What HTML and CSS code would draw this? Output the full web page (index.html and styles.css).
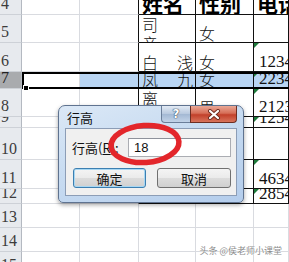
FILE: index.html
```html
<!DOCTYPE html>
<html lang="zh-CN">
<head>
    <meta charset="UTF-8">
    <title>行高</title>
    <link rel="stylesheet" href="styles.css">
</head>
<body>
<div class="sheet">

    <div class="row r4">
        <div class="hd">4</div><div class="c"></div><div class="c tl"></div>
        <div class="c t head">姓名</div><div class="c t head">性别</div><div class="c t head">电话</div>
    </div>
    <div class="row r5">
        <div class="hd">5</div><div class="c"></div><div class="c tl"></div>
        <div class="c t top"><span class="wrapped">司<br>亲</span></div><div class="c t cjk">女</div><div class="c t"></div>
    </div>
    <div class="row r6">
        <div class="hd">6</div><div class="c"></div><div class="c tl"></div>
        <div class="c t cjk spread"><span>白</span><span>浅</span></div><div class="c t cjk">女</div><div class="c t num">1234</div>
    </div>
    <div class="row r7 picked">
        <div class="hd on">7</div><div class="c active"></div><div class="c tl"></div>
        <div class="c t cjk spread"><span>凤</span><span>九</span></div><div class="c t cjk">女</div><div class="c t num">2234</div>
    </div>
    <div class="row r8">
        <div class="hd">8</div><div class="c"></div><div class="c tl"></div>
        <div class="c t top"><span class="wrapped">离<br>镜</span></div><div class="c t cjk">男</div><div class="c t num">2123</div>
    </div>
    <div class="row r9">
        <div class="hd">9</div><div class="c"></div><div class="c tl"></div>
        <div class="c t"></div><div class="c t"></div><div class="c t num">1254</div>
    </div>
    <div class="row r10">
        <div class="hd">10</div><div class="c"></div><div class="c tl"></div>
        <div class="c t"></div><div class="c t"></div><div class="c t"></div>
    </div>
    <div class="row r11">
        <div class="hd">11</div><div class="c"></div><div class="c tl"></div>
        <div class="c t"></div><div class="c t"></div><div class="c t num">4634</div>
    </div>
    <div class="row r12">
        <div class="hd">12</div><div class="c"></div><div class="c tl"></div>
        <div class="c t"></div><div class="c t"></div><div class="c t num">2854</div>
    </div>
    <div class="row r13">
        <div class="hd">13</div><div class="c"></div><div class="c"></div>
        <div class="c"></div><div class="c"></div><div class="c"></div>
    </div>
    <div class="row r14">
        <div class="hd">14</div><div class="c"></div><div class="c"></div>
        <div class="c"></div><div class="c"></div><div class="c"></div>
    </div>
    <div class="row r15">
        <div class="hd">15</div><div class="c"></div><div class="c"></div>
        <div class="c"></div><div class="c"></div><div class="c"></div>
    </div>

    <!-- selection box around row 7 -->
    <div class="selection"><span class="handle"></span></div>

    <!-- row height dialog -->
    <div class="dialog">
        <div class="titlebar">
            <span class="title">行高</span>
            <div class="caption">
                <span class="cap-help">?</span>
                <span class="cap-close">
                    <svg width="14" height="11" viewBox="0 0 14 11">
                        <path d="M3 2 L11 9 M11 2 L3 9" stroke="#6b2a1e" stroke-width="4" stroke-linecap="round"/>
                        <path d="M3 2 L11 9 M11 2 L3 9" stroke="#ffffff" stroke-width="2.2" stroke-linecap="round"/>
                    </svg>
                </span>
            </div>
        </div>
        <div class="client">
            <div class="field">
                <label for="rowHeight">行高(<u>R</u>):</label>
                <input id="rowHeight" type="text" value="18">
            </div>
            <div class="buttons">
                <button class="btn default">确定</button>
                <button class="btn">取消</button>
            </div>
        </div>
    </div>

    <!-- red marker circle -->
    <svg class="marker" width="289" height="262" viewBox="0 0 289 262">
        <ellipse cx="145" cy="144" rx="34" ry="18.5" transform="rotate(-4 145 144)"
                 fill="none" stroke="#e3262b" stroke-width="5.5"/>
    </svg>

    <div class="watermark">头条 @侯老师小课堂</div>
</div>
</body>
</html>
```

FILE: styles.css
```css
/* Sheet */
* {
    box-sizing: border-box;
    margin: 0;
    padding: 0;
}
body {
    background: #ffffff;
    font-family: "Liberation Serif", "Noto Sans CJK SC", serif;
}
.sheet {
    position: relative;
    width: 289px;
    height: 262px;
    overflow: hidden;
}
.row {
    display: grid;
    grid-template-columns: 22px 58px 59px 57px 58px 1fr;
}
.r4 { height: 15px; }
.r5 { height: 28px; }
.r6 { height: 29px; }
.r7 { height: 17px; }
.r8 { height: 28px; }
.r9 { height: 11px; }
.r10 { height: 32px; }
.r11 { height: 29px; }
.r12 { height: 15px; }
.r13, .r14, .r15 { height: 24px; }

.hd {
    display: flex;
    align-items: flex-end;
    padding: 0 0 2px 1px;
    font-size: 16px;
    line-height: 1;
    color: #3c3c3c;
    background: #e7eaee;
    border-right: 1px solid #b4b9c1;
    border-bottom: 1px solid #cdd1d7;
    overflow: hidden;
}
.hd.on {
    background: #a9abae;
    color: #222;
}
.c {
    position: relative;
    display: flex;
    align-items: flex-end;
    padding: 0 2px 1px 3px;
    border-right: 1px solid #d9dbe0;
    border-bottom: 1px solid #d9dbe0;
    overflow: hidden;
    white-space: nowrap;
    line-height: 1;
}
.c.tl {
    border-right-color: #111;
}
.c.t {
    border-right-color: #111;
    border-bottom-color: #111;
}
.picked .c {
    background: #b9d5f3;
}
.picked .c.active {
    background: #ffffff;
}
.head {
    font-family: "Noto Sans CJK SC", sans-serif;
    font-weight: 700;
    font-size: 21px;
    padding-bottom: 0;
    color: #000;
}
.cjk {
    font-family: "Noto Sans CJK SC", sans-serif;
    font-weight: 300;
    font-size: 16px;
    color: #111;
}
.spread {
    justify-content: space-between;
}
.top {
    align-items: flex-start;
}
.wrapped {
    font-family: "Noto Sans CJK SC", sans-serif;
    font-weight: 300;
    font-size: 16px;
    line-height: 19px;
    color: #111;
}
.num {
    font-size: 17px;
    color: #111;
    padding-left: 5px;
}
.num::before {
    content: "";
    position: absolute;
    top: 0;
    left: 0;
    border-top: 5px solid #1e7b3c;
    border-right: 5px solid transparent;
}

/* Active selection */
.selection {
    position: absolute;
    left: 22px;
    top: 72px;
    right: -4px;
    height: 17px;
    border: 2px solid #000;
}
.handle {
    position: absolute;
    left: -1px;
    bottom: -4px;
    width: 6px;
    height: 6px;
    background: #000;
    border: 1px solid #fff;
}

/* Dialog */
.dialog {
    position: absolute;
    left: 58px;
    top: 105px;
    width: 186px;
    height: 98px;
    display: flex;
    flex-direction: column;
    padding: 0 6px 6px 6px;
    border: 1px solid #5f7390;
    border-radius: 7px 7px 5px 5px;
    background: linear-gradient(160deg, #dbe8f6 0%, #c7dbf1 45%, #b4cdec 100%);
    box-shadow: 0 2px 4px rgba(0, 0, 0, 0.35);
    font-family: "Noto Sans CJK SC", sans-serif;
}
.titlebar {
    display: flex;
    justify-content: space-between;
    height: 22px;
}
.title {
    padding: 4px 0 0 2px;
    font-size: 13px;
    line-height: 16px;
    color: #111;
}
.caption {
    display: flex;
    height: 17px;
}
.cap-help {
    width: 29px;
    display: flex;
    justify-content: center;
    align-items: center;
    font-family: "DejaVu Sans", sans-serif;
    font-weight: 700;
    font-size: 12px;
    color: #fff;
    text-shadow: 0 0 1px #3a4a63, 0 0 1px #3a4a63, 0 0 1px #3a4a63;
    background: linear-gradient(#e2eaf4, #b7c8de 50%, #a3b8d3 51%, #c2d3e8);
    border: 1px solid #6b7e99;
    border-top: none;
    border-right: none;
    border-radius: 0 0 0 4px;
}
.cap-close {
    width: 47px;
    display: flex;
    justify-content: center;
    align-items: center;
    background: linear-gradient(#e9a795, #d66e57 45%, #c2402a 55%, #d8745c);
    border: 1px solid #6d2e22;
    border-top: none;
    border-radius: 0 0 4px 0;
}
.client {
    flex: 1;
    display: flex;
    flex-direction: column;
    padding: 9px 5px 0 6px;
    background: #f0f0f0;
    border: 1px solid #8c9db6;
}
.field {
    display: flex;
    justify-content: space-between;
    align-items: center;
    height: 19px;
}
.field label {
    font-size: 13px;
    color: #111;
}
.field input {
    width: 103px;
    height: 19px;
    padding: 0 5px;
    border: 1px solid #abadb3;
    border-top-color: #8e929b;
    background: #fff;
    font-family: "Liberation Sans", sans-serif;
    font-size: 13px;
    color: #111;
}
.buttons {
    display: flex;
    justify-content: space-between;
    margin-top: 11px;
    padding-left: 1px;
}
.btn {
    width: 74px;
    height: 20px;
    border: 1px solid #707070;
    border-radius: 3px;
    background: linear-gradient(#f4f4f4, #ebebeb 48%, #dcdcdc 52%, #d0d0d0);
    font-family: "Noto Sans CJK SC", sans-serif;
    font-size: 13px;
    line-height: 1;
    color: #111;
}
.btn.default {
    width: 73px;
    border-color: #3c7fb1;
    box-shadow: inset 0 0 0 1px #a7d7f3;
}

/* Overlays */
.marker {
    position: absolute;
    left: 0;
    top: 0;
}
.watermark {
    position: absolute;
    right: 7px;
    bottom: 5px;
    font-family: "Noto Sans CJK SC", sans-serif;
    font-size: 9px;
    color: #8c8c8c;
    text-shadow: 0 0 1px #fff, 0 0 1px #fff;
}
```
